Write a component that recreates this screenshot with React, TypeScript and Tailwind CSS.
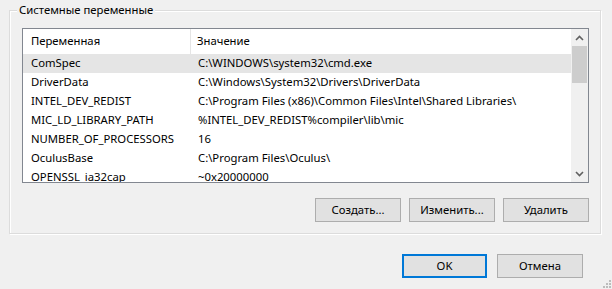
import React from 'react';

const rows: [string, string][] = [
  ['ComSpec', 'C:\\WINDOWS\\system32\\cmd.exe'],
  ['DriverData', 'C:\\Windows\\System32\\Drivers\\DriverData'],
  ['INTEL_DEV_REDIST', 'C:\\Program Files (x86)\\Common Files\\Intel\\Shared Libraries\\'],
  ['MIC_LD_LIBRARY_PATH', '%INTEL_DEV_REDIST%compiler\\lib\\mic'],
  ['NUMBER_OF_PROCESSORS', '16'],
  ['OculusBase', 'C:\\Program Files\\Oculus\\'],
  ['OPENSSL_ia32cap', '~0x20000000'],
];

function Chevron({ down }: { down?: boolean }) {
  return (
    <svg width="9" height="6" viewBox="0 0 9 6" className={down ? 'rotate-180' : ''}>
      <path d="M1 5 L4.5 1.5 L8 5" fill="none" stroke="#606060" strokeWidth="1.6" />
    </svg>
  );
}

function Btn({ children, primary }: { children: React.ReactNode; primary?: boolean }) {
  return (
    <button
      className={
        primary
          ? 'w-[85px] h-[24px] bg-[#e1e1e1] border-2 border-[#0078d7] text-black'
          : 'w-[86px] h-[24px] bg-[#e1e1e1] border border-[#adadad] text-black'
      }
    >
      {children}
    </button>
  );
}

export default function App() {
  return (
    <div
      className="w-[612px] h-[289px] bg-[#f0f0f0] relative overflow-hidden text-[11.3px] text-black"
      style={{ fontFamily: '"Noto Sans", "Open Sans", sans-serif' }}
    >
      <div className="pt-[10px] pl-[9px]">
        {/* group box */}
        <div className="relative w-[592px] h-[224px] border border-[#dcdcdc] shadow-[inset_1px_1px_0_#ffffff,1px_1px_0_#ffffff] pl-[12px] pt-[17px]">
          <span className="absolute -top-[10px] left-[7px] px-[2px] bg-[#f0f0f0] leading-[18px]">
            Системные переменные
          </span>

          {/* list view */}
          <div className="w-[567px] h-[155px] border border-[#828790] bg-white flex overflow-hidden">
            <div className="flex-1 flex flex-col overflow-hidden">
              <div className="h-[25px] flex items-center shrink-0">
                <div className="w-[168px] pl-[8px] h-full flex items-center border-r border-[#e5e5e5]">Переменная</div>
                <div className="pl-[6px]">Значение</div>
              </div>
              {rows.map(([name, value], i) => (
                <div
                  key={name}
                  className={'h-[19px] flex items-center shrink-0 whitespace-nowrap ' + (i === 0 ? 'bg-[#e5e5e5]' : '')}
                >
                  <div className="w-[168px] pl-[8px]">{name}</div>
                  <div className="pl-[7px]">{value}</div>
                </div>
              ))}
            </div>
            {/* scrollbar */}
            <div className="w-[17px] bg-[#f0f0f0] flex flex-col">
              <div className="h-[17px] flex items-center justify-center">
                <Chevron />
              </div>
              <div className="mx-[1px] h-[37px] bg-[#cdcdcd]" />
              <div className="flex-1" />
              <div className="h-[17px] flex items-center justify-center">
                <Chevron down />
              </div>
            </div>
          </div>

          <div className="mt-[15px] w-[567px] flex justify-end gap-[8px]">
            <Btn>Создать...</Btn>
            <Btn>Изменить...</Btn>
            <Btn>Удалить</Btn>
          </div>
        </div>
      </div>

      <div className="mt-[20px] mr-[29px] flex justify-end gap-[10px]">
        <Btn primary>OK</Btn>
        <Btn>Отмена</Btn>
      </div>

      {/* resize grip */}
      <svg width="12" height="12" viewBox="0 0 12 12" className="absolute right-0 bottom-0">
        {[
          [9, 3],
          [9, 6],
          [6, 6],
          [9, 9],
          [6, 9],
          [3, 9],
        ].map(([x, y]) => (
          <rect key={`${x}-${y}`} x={x} y={y} width="2" height="2" fill="#bcbcbc" />
        ))}
      </svg>
    </div>
  );
}
